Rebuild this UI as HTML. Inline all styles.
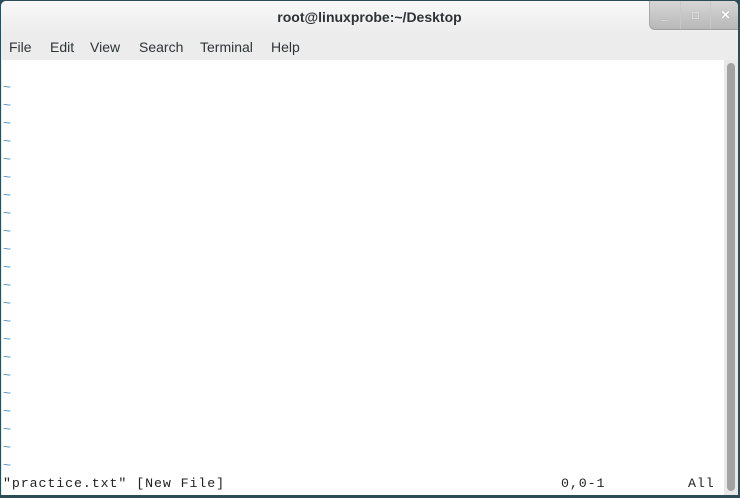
<!DOCTYPE html><html><head><style>
body{margin:0;width:740px;height:498px;background:#2c4d55;overflow:hidden;position:relative;font-family:"Liberation Sans",sans-serif}
.win{position:absolute;left:1px;top:1px;width:737px;height:494px;background:#ececec;border-radius:5px 5px 0 0;overflow:hidden}
.title{position:absolute;left:0;top:0;width:737px;height:34px;background:linear-gradient(#f8f8f8,#ececec);text-align:center;line-height:32px;font-size:14px;font-weight:bold;color:#2e3436}
.btns{position:absolute;left:648px;top:0;width:89px;height:28px;background:linear-gradient(#d6d6d6,#b8b8b8);border-radius:0 0 0 6px;border-left:1px solid #a8a8a8;border-bottom:1px solid #a0a0a0}
.btns div{position:absolute;top:0;width:29px;height:28px;border-left:1px solid #c8c8c8;color:#fff;font-weight:bold;text-align:center;line-height:28px;font-size:12px;text-shadow:0 0 1px #888}
.menu{position:absolute;top:34px;left:0;height:26px;font-size:14px;color:#2e3436}
.menu span{position:absolute;top:4px;white-space:nowrap}
.term{position:absolute;left:1px;top:59px;width:722px;height:435px;background:#fff;font-family:"Liberation Mono",monospace;font-size:13.3px;color:#222;letter-spacing:0.9px}
.l{position:absolute;left:1px;height:18px;line-height:18px;white-space:pre}
.t{color:#4a8fc0}
.sb{position:absolute;left:723px;top:59px;width:14px;height:435px;background:#e8e8e8}
.th{position:absolute;left:3px;top:3px;width:8px;height:428px;background:#a2a2a2;border-radius:4px}
</style></head><body><div class="win">
<div class="title">root@linuxprobe:~/Desktop</div>
<div class="btns"><div style="left:0;border:none">_</div><div style="left:30px">□</div><div style="left:60px">✕</div></div>
<div class="menu"><span style="left:8px">File</span><span style="left:49px">Edit</span><span style="left:89px">View</span><span style="left:138px">Search</span><span style="left:199px">Terminal</span><span style="left:270px">Help</span></div>
<div class="term" id="t"></div>
<div class="sb"><div class="th"></div></div>
</div>
<script>
var t=document.getElementById('t'),h='';
for(var i=1;i<=22;i++)h+='<div class="l t" style="top:'+(i*18+1)+'px">~</div>';
h+='<div class="l" style="top:415px">"practice.txt" [New File]</div><div class="l" style="top:415px;left:559px">0,0-1</div><div class="l" style="top:415px;left:686px">All</div>';
t.innerHTML=h;
</script>
</body></html>
